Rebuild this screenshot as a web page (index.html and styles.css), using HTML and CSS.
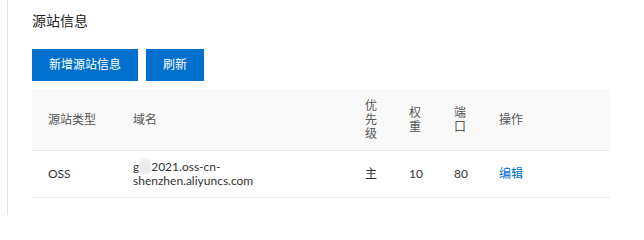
FILE: index.html
```html
<!DOCTYPE html>
<html lang="zh-CN">
<head>
<meta charset="utf-8">
<title>源站信息</title>
<link rel="stylesheet" href="styles.css">
</head>
<body>
<div class="page">
  <div class="panel">
    <h3 class="title">源站信息</h3>
    <div class="actions">
      <button class="btn">新增源站信息</button>
      <button class="btn">刷新</button>
    </div>
    <table class="grid">
      <colgroup>
        <col class="c-type"><col class="c-domain"><col class="c-pri"><col class="c-weight"><col class="c-port"><col class="c-op">
      </colgroup>
      <thead>
        <tr><th>源站类型</th><th>域名</th><th>优先级</th><th>权重</th><th>端口</th><th>操作</th></tr>
      </thead>
      <tbody>
        <tr>
          <td>OSS</td>
          <td>g<span class="blur">xx</span>2021.oss-cn-<br>shenzhen.aliyuncs.com</td>
          <td>主</td>
          <td>10</td>
          <td>80</td>
          <td><a class="link" href="#">编辑</a></td>
        </tr>
      </tbody>
    </table>
  </div>
</div>
</body>
</html>
```
FILE: styles.css
```css
html, body {
  margin: 0;
  padding: 0;
  background: #ffffff;
}
body {
  font-family: "Lato", "Noto Sans CJK SC", sans-serif;
  color: #333333;
  font-size: 12px;
}
.page {
  padding-left: 7px;
  height: 215px;
  box-sizing: border-box;
}
.panel {
  border-left: 1px solid #e3e3e3;
  height: 100%;
  padding: 11px 0 0 24px;
  box-sizing: border-box;
}
.title {
  margin: 0;
  font-size: 14px;
  font-weight: normal;
  line-height: 20px;
  color: #222222;
}
.actions {
  display: flex;
  gap: 8px;
  margin-top: 18px;
}
.btn {
  height: 32px;
  padding: 0 17px;
  border: none;
  background: #0070cc;
  color: #ffffff;
  font-family: inherit;
  font-size: 12px;
  line-height: 32px;
  cursor: pointer;
}
.grid {
  margin-top: 8px;
  width: 578px;
  table-layout: fixed;
  border-collapse: separate;
  border-spacing: 0;
}
.c-type { width: 85px; }
.c-domain { width: 232px; }
.c-pri { width: 44px; }
.c-weight { width: 45px; }
.c-port { width: 45px; }
.c-op { width: 127px; }
.grid th {
  background: #f9f9f9;
  color: #555555;
  font-weight: normal;
  text-align: left;
  line-height: 14px;
  padding: 10px 16px 9px 16px;
  border-bottom: 1px solid #e8e8e8;
  vertical-align: middle;
}
.grid td {
  line-height: 14px;
  padding: 9px 16px;
  border-bottom: 1px solid #e8e8e8;
  vertical-align: middle;
  color: #333333;
}
.blur {
  color: #e6e6e6;
  background: #ececec;
  border-radius: 4px;
  filter: blur(1px);
}
.link {
  color: #0070cc;
  text-decoration: none;
}
```
